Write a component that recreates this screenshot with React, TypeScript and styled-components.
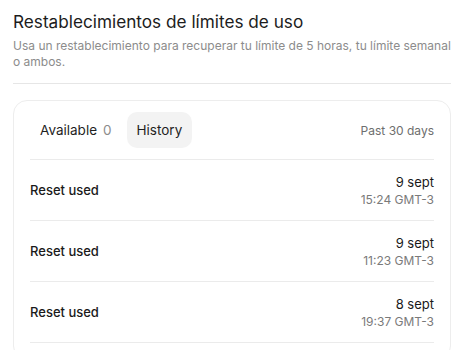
import React from "react";
import styled, { createGlobalStyle } from "styled-components";

const Global = createGlobalStyle`
  html, body { margin: 0; padding: 0; background: #ffffff; }
  body { font-family: Inter, "Noto Sans", sans-serif; color: #1f1f1f; -webkit-font-smoothing: antialiased; }
  * { box-sizing: border-box; }
`;

const Page = styled.div`
  width: 461px;
  height: 350px;
  overflow: hidden;
  padding: 9px 10px 0 13px;
`;

const Header = styled.header`
  padding-bottom: 13px;
  border-bottom: 1px solid #e6e6e6;
`;

const Title = styled.h1`
  margin: 0;
  font-size: 17.2px;
  line-height: 26px;
  font-weight: 400;
  color: #1c1c1c;
`;

const Subtitle = styled.p`
  margin: 3px 0 0;
  font-size: 12px;
  line-height: 16px;
  color: #8c8c8c;
`;

const Card = styled.section`
  margin-top: 16px;
  border: 1px solid #ededed;
  border-radius: 14px;
  padding: 11px 16px 16px;
`;

const TabBar = styled.div`
  display: flex;
  align-items: center;
  padding-bottom: 11px;
  border-bottom: 1px solid #ebebeb;
`;

const Tabs = styled.div`
  display: flex;
  gap: 5px;
`;

const Tab = styled.button<{ $active?: boolean }>`
  all: unset;
  display: flex;
  align-items: center;
  gap: 6px;
  height: 36px;
  padding: 0 10px;
  border-radius: 10px;
  font-family: Inter, "Noto Sans", sans-serif;
  font-size: 13.5px;
  color: #1f1f1f;
  background: ${(p) => (p.$active ? "#f3f3f3" : "transparent")};
`;

const Count = styled.span`
  color: #8c8c8c;
`;

const Range = styled.span`
  margin-left: auto;
  font-size: 12px;
  color: #6e6e6e;
`;

const Row = styled.div`
  display: flex;
  align-items: center;
  justify-content: space-between;
  height: 61px;
  border-bottom: 1px solid #ebebeb;
`;

const Label = styled.span`
  font-size: 13px;
  font-weight: 500;
  color: #1a1a1a;
`;

const When = styled.div`
  display: flex;
  flex-direction: column;
  align-items: flex-end;
  line-height: 17px;
  padding-top: 1px;
`;

const DateText = styled.span`
  font-size: 13px;
  color: #1a1a1a;
`;

const TimeText = styled.span`
  font-size: 12px;
  color: #7a7a7a;
`;

const history = [
  { date: "9 sept", time: "15:24 GMT-3" },
  { date: "9 sept", time: "11:23 GMT-3" },
  { date: "8 sept", time: "19:37 GMT-3" },
];

export default function App() {
  return (
    <Page>
      <Global />
      <Header>
        <Title>Restablecimientos de límites de uso</Title>
        <Subtitle>
          Usa un restablecimiento para recuperar tu límite de 5 horas, tu límite semanal o ambos.
        </Subtitle>
      </Header>
      <Card>
        <TabBar>
          <Tabs>
            <Tab>
              Available <Count>0</Count>
            </Tab>
            <Tab $active>History</Tab>
          </Tabs>
          <Range>Past 30 days</Range>
        </TabBar>
        {history.map((h, i) => (
          <Row key={i}>
            <Label>Reset used</Label>
            <When>
              <DateText>{h.date}</DateText>
              <TimeText>{h.time}</TimeText>
            </When>
          </Row>
        ))}
      </Card>
    </Page>
  );
}
